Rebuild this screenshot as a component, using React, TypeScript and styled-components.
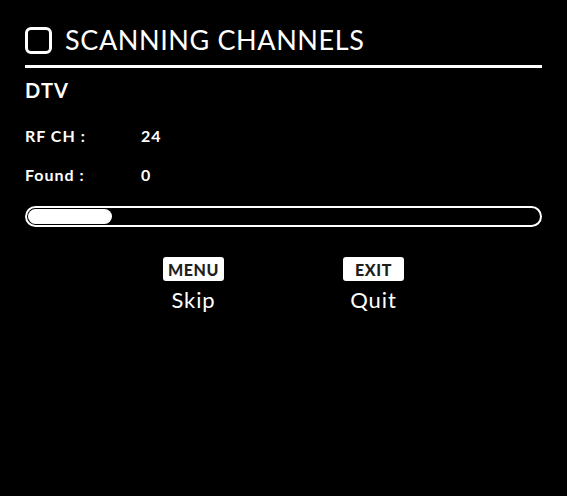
import styled, { createGlobalStyle } from "styled-components";

const GlobalStyle = createGlobalStyle`
  html, body {
    margin: 0;
    padding: 0;
    background: #000;
  }
  body {
    font-family: Lato, "Open Sans", sans-serif;
    color: #fff;
  }
`;

const Screen = styled.div`
  width: 567px;
  height: 496px;
  background: #000;
  padding: 26px 25px 0 25px;
  box-sizing: border-box;
`;

const Header = styled.div`
  display: flex;
  align-items: center;
  gap: 13px;
  height: 28px;
  padding-bottom: 11px;
  border-bottom: 3px solid #fff;
`;

const CheckBox = styled.div`
  width: 27px;
  height: 27px;
  box-sizing: border-box;
  border: 3px solid #fff;
  border-radius: 6px;
`;

const Title = styled.h1`
  margin: 0;
  font-size: 27px;
  font-weight: 400;
  letter-spacing: 0.6px;
  line-height: 28px;
`;

const Source = styled.div`
  margin-top: 10px;
  font-size: 20px;
  font-weight: 700;
  letter-spacing: 1.2px;
  line-height: 24px;
`;

const InfoList = styled.div`
  margin-top: 24px;
  display: flex;
  flex-direction: column;
  gap: 19px;
`;

const InfoRow = styled.div`
  display: grid;
  grid-template-columns: 116px 1fr;
  font-size: 16px;
  font-weight: 700;
  line-height: 20px;
  letter-spacing: 1px;
`;

const Progress = styled.div`
  margin-top: 21px;
  height: 21px;
  box-sizing: border-box;
  border: 2px solid #fff;
  border-radius: 11px;
  padding: 1px;
`;

const ProgressFill = styled.div`
  height: 100%;
  background: #fff;
  border-radius: 9px;
`;

const Actions = styled.div`
  margin-top: 30px;
  display: flex;
  justify-content: center;
  gap: 60px;
`;

const Action = styled.div`
  width: 120px;
  display: flex;
  flex-direction: column;
  align-items: center;
  gap: 7px;
`;

const KeyBadge = styled.div`
  width: 61px;
  height: 24px;
  box-sizing: border-box;
  background: #fff;
  color: #1e1e1e;
  border-radius: 3px;
  display: flex;
  align-items: center;
  justify-content: center;
  font-size: 16px;
  font-weight: 900;
  letter-spacing: 0.6px;
`;

const ActionLabel = styled.div`
  font-size: 22px;
  font-weight: 400;
  line-height: 24px;
  letter-spacing: 0.9px;
`;

const info = [
  { label: "RF CH :", value: "24" },
  { label: "Found :", value: "0" },
];

const actions = [
  { key: "MENU", label: "Skip" },
  { key: "EXIT", label: "Quit" },
];

export default function App() {
  const progress = 16.5;

  return (
    <>
      <GlobalStyle />
      <Screen>
        <Header>
          <CheckBox />
          <Title>SCANNING CHANNELS</Title>
        </Header>
        <Source>DTV</Source>
        <InfoList>
          {info.map((row) => (
            <InfoRow key={row.label}>
              <span>{row.label}</span>
              <span>{row.value}</span>
            </InfoRow>
          ))}
        </InfoList>
        <Progress>
          <ProgressFill style={{ width: `${progress}%` }} />
        </Progress>
        <Actions>
          {actions.map((a) => (
            <Action key={a.key}>
              <KeyBadge>{a.key}</KeyBadge>
              <ActionLabel>{a.label}</ActionLabel>
            </Action>
          ))}
        </Actions>
      </Screen>
    </>
  );
}
